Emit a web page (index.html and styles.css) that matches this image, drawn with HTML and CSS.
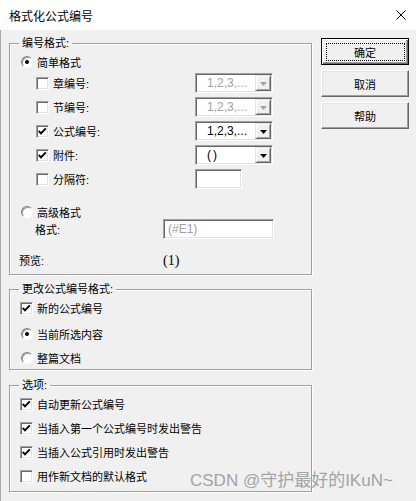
FILE: index.html
```html
<!DOCTYPE html>
<html lang="zh-CN">
<head>
<meta charset="utf-8">
<title>格式化公式编号</title>
<link rel="stylesheet" href="styles.css">
</head>
<body>
<div class="window">
  <div class="titlebar">
    <span class="title">格式化公式编号</span>
    <svg class="close" width="10" height="10" viewBox="0 0 10 10"><path d="M0.5 0.5 L9.5 9.5 M9.5 0.5 L0.5 9.5" stroke="#000" stroke-width="1" fill="none"/></svg>
  </div>
  <div class="main">
    <div class="left">
      <fieldset class="group g1">
        <legend>编号格式:</legend>
        <div class="row r-simple"><span class="radio on"></span><span>简单格式</span></div>
        <div class="row opt first">
          <span class="lab"><span class="chk"></span><span>章编号:</span></span>
          <span class="combo disabled"><span class="val">1,2,3,...</span><span class="dbtn"><svg width="7" height="4" viewBox="0 0 7 4"><polygon points="0,0 7,0 3.5,4"/></svg></span></span>
        </div>
        <div class="row opt">
          <span class="lab"><span class="chk"></span><span>节编号:</span></span>
          <span class="combo disabled"><span class="val">1,2,3,...</span><span class="dbtn"><svg width="7" height="4" viewBox="0 0 7 4"><polygon points="0,0 7,0 3.5,4"/></svg></span></span>
        </div>
        <div class="row opt">
          <span class="lab"><span class="chk on"><svg width="11" height="11" viewBox="0 0 11 11"><polyline points="1.8,5 4,7.4 8.8,2.4" fill="none" stroke="#000" stroke-width="1.9"/></svg></span><span>公式编号:</span></span>
          <span class="combo"><span class="val">1,2,3,...</span><span class="dbtn"><svg width="7" height="4" viewBox="0 0 7 4"><polygon points="0,0 7,0 3.5,4"/></svg></span></span>
        </div>
        <div class="row opt">
          <span class="lab"><span class="chk on"><svg width="11" height="11" viewBox="0 0 11 11"><polyline points="1.8,5 4,7.4 8.8,2.4" fill="none" stroke="#000" stroke-width="1.9"/></svg></span><span>附件:</span></span>
          <span class="combo"><span class="val paren">()</span><span class="dbtn"><svg width="7" height="4" viewBox="0 0 7 4"><polygon points="0,0 7,0 3.5,4"/></svg></span></span>
        </div>
        <div class="row opt">
          <span class="lab"><span class="chk"></span><span>分隔符:</span></span>
          <span class="edit small"></span>
        </div>
        <div class="row r-adv"><span class="radio"></span><span>高级格式</span></div>
        <div class="row r-fmt"><span class="flab">格式:</span><span class="edit wide"><span class="ph">(#E1)</span></span></div>
        <div class="row r-prev"><span class="plab">预览:</span><span class="preview">(1)</span></div>
      </fieldset>

      <fieldset class="group g2">
        <legend>更改公式编号格式:</legend>
        <div class="row c-row first"><span class="chk on focus"><svg width="11" height="11" viewBox="0 0 11 11"><polyline points="1.8,5 4,7.4 8.8,2.4" fill="none" stroke="#000" stroke-width="1.9"/></svg></span><span>新的公式编号</span></div>
        <div class="row r-row r2"><span class="radio on"></span><span>当前所选内容</span></div>
        <div class="row r-row r3"><span class="radio"></span><span>整篇文档</span></div>
      </fieldset>

      <fieldset class="group g3">
        <legend>选项:</legend>
        <div class="row c-row first"><span class="chk on"><svg width="11" height="11" viewBox="0 0 11 11"><polyline points="1.8,5 4,7.4 8.8,2.4" fill="none" stroke="#000" stroke-width="1.9"/></svg></span><span>自动更新公式编号</span></div>
        <div class="row c-row"><span class="chk on"><svg width="11" height="11" viewBox="0 0 11 11"><polyline points="1.8,5 4,7.4 8.8,2.4" fill="none" stroke="#000" stroke-width="1.9"/></svg></span><span>当插入第一个公式编号时发出警告</span></div>
        <div class="row c-row"><span class="chk on"><svg width="11" height="11" viewBox="0 0 11 11"><polyline points="1.8,5 4,7.4 8.8,2.4" fill="none" stroke="#000" stroke-width="1.9"/></svg></span><span>当插入公式引用时发出警告</span></div>
        <div class="row c-row"><span class="chk"></span><span>用作新文档的默认格式</span></div>
      </fieldset>
    </div>

    <div class="buttons">
      <button class="btn default"><span class="focusrect"></span>确定</button>
      <button class="btn">取消</button>
      <button class="btn">帮助</button>
    </div>
  </div>
  <div class="watermark">CSDN @守护最好的IKuN~</div>
</div>
</body>
</html>
```

FILE: styles.css
```css
* { box-sizing: border-box; }

html, body {
  margin: 0;
  padding: 0;
  background: #f0f0f0;
}

.window {
  position: relative;
  width: 416px;
  height: 501px;
  background: #f0f0f0;
  overflow: hidden;
  font-family: "Liberation Sans", "Noto Sans CJK SC", sans-serif;
  font-size: 11px;
  color: #000;
}

.titlebar {
  height: 30px;
  background: #fff;
  display: flex;
  align-items: center;
  padding-left: 9px;
}

.title {
  font-size: 12px;
  font-family: "Noto Sans CJK SC", sans-serif;
}

.close {
  margin-left: auto;
  margin-right: 10px;
}

.main {
  display: flex;
  height: 471px;
  padding-left: 9px;
  box-shadow: inset 1px 0 0 #a8a8a8;
}

.left {
  width: 303px;
  display: flex;
  flex-direction: column;
}

.group {
  margin: 0;
  padding: 0;
  min-inline-size: 0;
  border: 1px solid #a0a0a0;
  box-shadow: 1px 1px 0 #fff, inset 1px 1px 0 #fff;
}

.group legend {
  margin-left: 9px;
  padding: 0 3px;
  line-height: 14px;
  height: 14px;
  font-size: 11px;
}

.g1 { margin-top: 6px; padding-bottom: 4px; }
.g2 { margin-top: 7px; padding-bottom: 1px; }
.g3 { margin-top: 8px; padding-bottom: 5px; }

.row {
  display: flex;
  align-items: center;
  height: 20px;
  white-space: nowrap;
}

.r-simple { margin-top: 2px; padding-left: 11px; gap: 4px; }

.opt { margin-top: 4px; padding-left: 26px; }
.opt.first { margin-top: 1px; }

.lab {
  width: 159px;
  display: flex;
  align-items: center;
  gap: 4px;
}

.r-adv { margin-top: 15px; height: 15px; padding-left: 11px; gap: 4px; }
.r-fmt { padding-left: 25px; }
.flab { width: 128px; }
.r-prev { margin-top: 11px; padding-left: 9px; }
.plab { width: 144px; }

.preview {
  font-family: "Liberation Serif", serif;
  font-size: 14px;
  position: relative;
  top: 1px;
}

.c-row { margin-top: 4px; padding-left: 10px; gap: 4px; }
.c-row.first { margin-top: 2px; }
.r-row { padding-left: 11px; gap: 4px; }
.r2 { margin-top: 6px; }
.r3 { margin-top: 4px; }

/* checkbox */
.chk {
  width: 13px;
  height: 13px;
  flex: none;
  background: #fff;
  border: 1px solid;
  border-color: #a0a0a0 #fff #fff #a0a0a0;
  box-shadow: inset 1px 1px 0 #696969, inset -1px -1px 0 #e3e3e3;
  display: flex;
}

.chk svg { display: block; }

/* radio */
.radio {
  width: 12px;
  height: 12px;
  flex: none;
  border-radius: 50%;
  background: #fff;
  border: 1px solid;
  border-color: #808080 #fff #fff #808080;
  box-shadow: inset 1px 1px 0 #a0a0a0;
  position: relative;
}

.radio.on::after {
  content: "";
  position: absolute;
  left: 3px;
  top: 3px;
  width: 4px;
  height: 4px;
  border-radius: 50%;
  background: #000;
}

/* combo box */
.combo {
  width: 78px;
  height: 20px;
  display: flex;
  background: #fff;
  border: 1px solid;
  border-color: #a0a0a0 #fff #fff #a0a0a0;
  box-shadow: inset 1px 1px 0 #696969, inset -1px -1px 0 #e3e3e3;
  padding: 1px;
}

.combo .val {
  flex: 1;
  padding-left: 10px;
  font-size: 12px;
  line-height: 16px;
  font-family: "Liberation Sans", sans-serif;
}

.combo .val.paren { letter-spacing: 2px; }

.combo.disabled .val { color: #a0a0a0; }

.dbtn {
  width: 16px;
  height: 16px;
  background: #f0f0f0;
  border: 1px solid;
  border-color: #e3e3e3 #696969 #696969 #e3e3e3;
  box-shadow: inset 1px 1px 0 #fff, inset -1px -1px 0 #a0a0a0;
  display: flex;
  align-items: center;
  justify-content: center;
}

.dbtn svg { display: block; fill: #000; margin-top: 1px; }
.combo.disabled .dbtn svg { fill: #a0a0a0; }

/* edit */
.edit {
  height: 20px;
  background: #fff;
  border: 1px solid;
  border-color: #a0a0a0 #fff #fff #a0a0a0;
  box-shadow: inset 1px 1px 0 #696969, inset -1px -1px 0 #e3e3e3;
  display: flex;
  align-items: center;
}

.edit.small { width: 47px; }
.edit.wide { width: 111px; }

.ph {
  color: #a0a0a0;
  font-size: 12px;
  padding-left: 4px;
  font-family: "Liberation Sans", sans-serif;
}

/* buttons */
.buttons {
  margin-left: 9px;
  margin-top: 8px;
  display: flex;
  flex-direction: column;
  gap: 5px;
}

.btn {
  position: relative;
  width: 88px;
  height: 27px;
  padding: 0;
  margin: 0;
  background: #f0f0f0;
  font-family: "Noto Sans CJK SC", sans-serif;
  font-size: 11px;
  color: #000;
  border: 1px solid;
  border-color: #fff #696969 #696969 #fff;
  box-shadow: inset -1px -1px 0 #a0a0a0, inset 1px 1px 0 #e3e3e3;
}

.btn.default {
  border: 1px solid #000;
  box-shadow: inset 1px 1px 0 #fff, inset -1px -1px 0 #696969, inset -2px -2px 0 #a0a0a0;
}

.focusrect {
  position: absolute;
  left: 4px;
  top: 4px;
  right: 3px;
  bottom: 3px;
  border: 1px dotted #000;
}

.watermark {
  position: absolute;
  left: 190px;
  top: 471px;
  font-size: 17px;
  line-height: 20px;
  color: #a3a3a3;
  font-family: "Liberation Sans", "Noto Sans CJK SC", sans-serif;
  white-space: nowrap;
}
```
